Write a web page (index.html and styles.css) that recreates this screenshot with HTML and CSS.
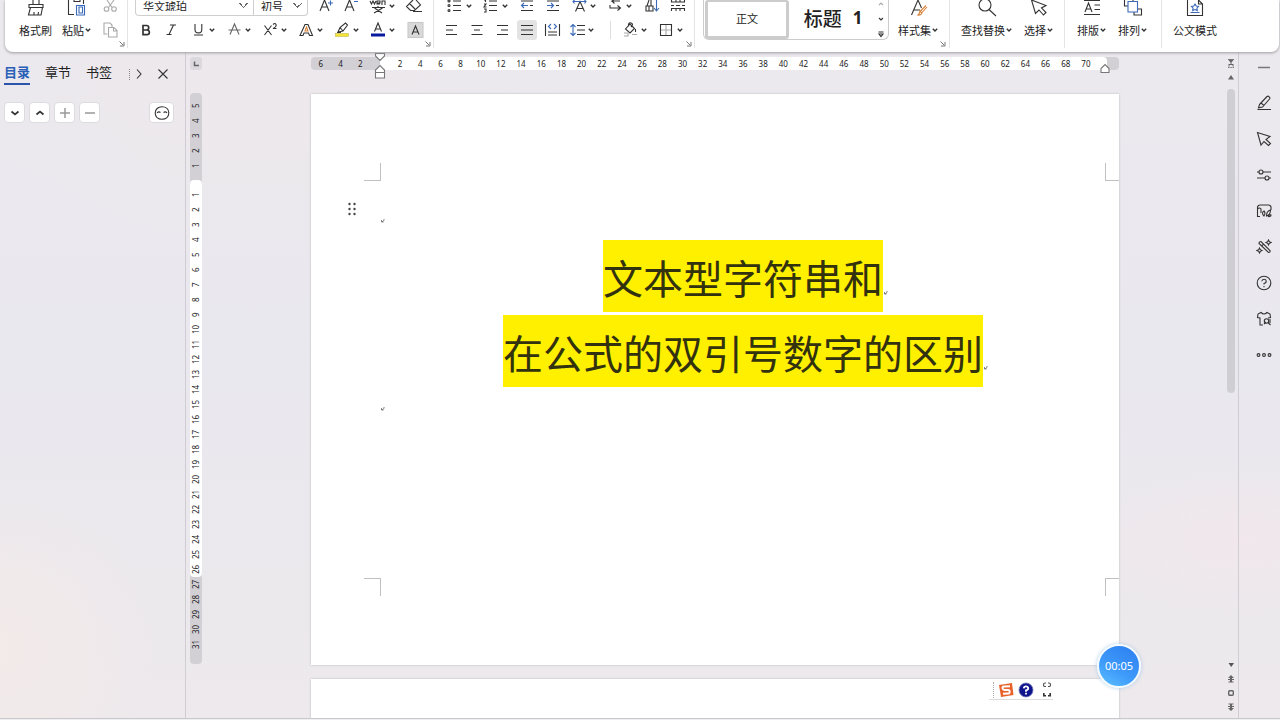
FILE: index.html
```html
<!DOCTYPE html>
<html lang="zh-CN">
<head>
<meta charset="utf-8">
<title>文字文稿</title>
<link rel="stylesheet" href="styles.css">
</head>
<body>
<svg class="defs" aria-hidden="true">
  <symbol id="chev" viewBox="0 0 8 8"><path d="M1.800 2.800 4 5 6.200 2.800" fill="none" stroke="#333" stroke-width="1.400"/></symbol>
  <symbol id="launch" viewBox="0 0 8 8"><path d="M1.500 1.500 5 5M6 2v4H2" fill="none" stroke="#777" stroke-width="1"/></symbol>
  <symbol id="mark" viewBox="0 0 6 6"><path d="M4 1v1.500L2 3.800M1.500 2v2h2" fill="none" stroke="#666" stroke-width=".8"/></symbol>
</svg>

<header class="ribbon">
  <section class="group clipboard">
    <div class="tools">
      <button class="big"><svg class="top" viewBox="0 0 20 18"><path d="M7 0v5M13 0v5M3 4.500h14v3H3zM4.500 7.500 2.500 15H15l1.500-7.500M8 15V12M12 15l.5-3" /></svg><span>格式刷</span></button>
      <button class="big"><svg class="top" viewBox="0 0 20 18"><path d="M7 14.500H1.500V0M7 0v1.500h6V0M16.500 0v4"/><path class="blue" d="M9.500 5.500h8v9.500h-8zM12 7h3.500v6H12z"/></svg><span>粘贴<svg class="chev"><use href="#chev"/></svg></span></button>
      <div class="pair">
        <button class="tool" aria-label="剪切"><svg class="top pale" viewBox="0 0 20 18"><path d="m5 0 5 7.500M12 0 6.500 7.500"/><circle cx="4.500" cy="9" r="2.300"/><circle cx="12" cy="9" r="2.300"/></svg></button>
        <button class="tool" aria-label="复制"><svg class="ico pale" viewBox="0 0 20 20"><path d="M5.500 14H2V3h6l2 2v2M6.500 7.500H12l3 3V17H6.500zM11.500 7.500V11H15"/></svg></button>
      </div>
    </div>
    <button class="launcher" aria-label="剪贴板"><svg><use href="#launch"/></svg></button>
  </section>

  <section class="group font">
    <div class="row upper">
      <div class="combo">
        <select class="family" aria-label="字体"><option>华文琥珀</option></select>
        <select class="size" aria-label="字号"><option>初号</option></select>
      </div>
      <button class="tool" aria-label="增大字号"><svg class="top" viewBox="0 0 20 18"><path d="m4 11 4.500-11L13 11M5.500 7h6"/><path class="blue" d="M12 3h5M14.500.5v5"/></svg></button>
      <button class="tool" aria-label="减小字号"><svg class="top" viewBox="0 0 20 18"><path d="m3 11 4.500-11L12 11M4.500 7h6"/><path class="blue" d="M12 1.500h4"/></svg></button>
      <button class="split" aria-label="拼音"><svg class="top" viewBox="0 0 20 18"><path d="m2 1 1.500 3L5 1l1.500 3L8 1M9 3h3V1H9v3h3M14 5V1h3v4M4 7.500h13M10 6v1.500M6.500 8l7.500 5M14.500 8 6 13"/></svg><svg class="chev"><use href="#chev"/></svg></button>
      <button class="tool" aria-label="清除格式"><svg class="top" viewBox="0 0 20 18"><path d="m9 0-6.500 6.500L6.500 10.500h4L16.500 5 12 0M5.500 3.500 11 9M9 11.500h9"/></svg></button>
    </div>
    <div class="row lower">
      <button class="tool" aria-label="加粗"><svg class="ico" viewBox="0 0 20 20"><path stroke-width="1.700" d="M7 5.500h3.500a2.200 2.200 0 0 1 0 4.500H7zM7 10h4a2.300 2.300 0 0 1 0 4.700H7z"/></svg></button>
      <button class="tool" aria-label="倾斜"><svg class="ico" viewBox="0 0 20 20"><path d="M8 5h6M4.500 14.500h5M11.500 5 7 14.500"/></svg></button>
      <button class="split" aria-label="下划线"><svg class="ico" viewBox="0 0 20 20"><path d="M7 4v5.500a3.400 3.400 0 0 0 6.800 0V4M6 15h9"/></svg><svg class="chev"><use href="#chev"/></svg></button>
      <button class="split" aria-label="删除线"><svg class="ico" viewBox="0 0 20 20"><path stroke="#666" d="M6 14.500 10.500 4 15 14.500M4.500 10h12"/></svg><svg class="chev"><use href="#chev"/></svg></button>
      <button class="split" aria-label="上标"><svg class="ico" viewBox="0 0 20 20"><path d="m4.500 5.500 7 9.500M11.500 5.500 4.500 15M13 4.500q2-2 3 0t-3 4h3.500"/></svg><svg class="chev"><use href="#chev"/></svg></button>
      <button class="split" aria-label="文字效果"><svg class="ico" viewBox="0 0 20 20"><path d="M4 15.500 9 4.500h3l4.500 11h-3l-1-2.500H8L7 15.500z"/><path class="orange" d="m9 11 1.500-4L12 11z"/></svg><svg class="chev"><use href="#chev"/></svg></button>
      <button class="split" aria-label="突出显示"><svg class="ico" viewBox="0 0 20 20"><path d="m6 12 2-4.500L13.500 3l2 2-4.500 6zM8 7.500l3 3.500M5 12.500h4"/><rect x="3.500" y="13.500" width="13" height="3" fill="#f4e43a" stroke="#b8ad40" stroke-width=".5"/></svg><svg class="chev"><use href="#chev"/></svg></button>
      <button class="split" aria-label="字体颜色"><svg class="ico" viewBox="0 0 20 20"><path d="M6.500 11.500 10 3l3.500 8.500M7.500 9h5"/><rect x="3" y="13.500" width="14" height="3" fill="#0a1a9c" stroke="none"/></svg><svg class="chev"><use href="#chev"/></svg></button>
      <button class="tool" aria-label="字符底纹"><svg class="ico" viewBox="0 0 20 20"><rect x="4" y="2.500" width="15" height="15" fill="#d9d9d9" stroke="#c8c8c8"/><path d="M8 14.500 11.500 6l3.500 8.500M9 12h5"/></svg></button>
    </div>
    <button class="launcher" aria-label="字体设置"><svg><use href="#launch"/></svg></button>
  </section>

  <section class="group para">
    <div class="row upper">
      <button class="split" aria-label="项目符号"><svg class="top" viewBox="0 0 20 18"><path d="M8 1h8M8 5.500h8M8 10.500h8"/><circle cx="4" cy="1" r="1"/><circle cx="4" cy="5.500" r="1"/><circle cx="4" cy="10.500" r="1"/></svg><svg class="chev"><use href="#chev"/></svg></button>
      <button class="split" aria-label="编号"><svg class="top" viewBox="0 0 20 18"><path d="M8 1h8M8 5.500h8M8 10.500h8M3 0h1.500v2M3 4h2L3 7h2.500M3 9h2v3H3"/></svg><svg class="chev"><use href="#chev"/></svg></button>
      <button class="tool" aria-label="减少缩进"><svg class="top" viewBox="0 0 20 18"><path d="M4 1h12M13 5.500h3M4 10.500h12"/><path class="blue" d="M11 5.500H4.500M7 3 4.500 5.500 7 8"/></svg></button>
      <button class="tool" aria-label="增加缩进"><svg class="top" viewBox="0 0 20 18"><path d="M4 1h12M13 5.500h3M4 10.500h12"/><path class="blue" d="M4 5.500h6.500M8 3l2.500 2.500L8 8"/></svg></button>
      <button class="split" aria-label="中文版式"><svg class="top" viewBox="0 0 20 18"><path d="m6.500 11.500 4.500-10 4.500 10M8 8.500h6"/><path class="blue" d="M4 1.500h13M5.500 0 4 1.500 5.500 3.500M15.500 0 17 1.500 15.500 3.500"/></svg><svg class="chev"><use href="#chev"/></svg></button>
      <button class="split" aria-label="显示编辑标记"><svg class="top" viewBox="0 0 20 18"><path d="M15 1H7L9.500-1M7 1l2.500 2.500M5 5v3h10M12.500 5.500 15.500 8 12.500 10.500"/></svg><svg class="chev"><use href="#chev"/></svg></button>
      <button class="tool" aria-label="排序"><svg class="top" viewBox="0 0 20 18"><path d="M8 0 6 6M10 0v6M5 6h7v5H5zM8 6v5"/><path class="blue" d="M15.500 0v10.500M13 8l2.500 3L18 8"/></svg></button>
      <button class="tool" aria-label="制表位"><svg class="top" viewBox="0 0 20 18"><path d="M4.500 0v2h13V0M4.500 11V8.500h13V11M4 5.500h3M9 5.500h4M15 5.500h3M9 0v2M13 0v2M9 8.500V11M13 8.500V11"/></svg></button>
    </div>
    <div class="row lower">
      <button class="tool" aria-label="左对齐"><svg class="ico" viewBox="0 0 20 20"><path d="M4 5.500h11M4 10h7M4 14.500h11"/></svg></button>
      <button class="tool" aria-label="居中"><svg class="ico" viewBox="0 0 20 20"><path d="M4.500 5.500h11M7 10h6M4.500 14.500h11"/></svg></button>
      <button class="tool" aria-label="右对齐"><svg class="ico" viewBox="0 0 20 20"><path d="M5 5.500h11M9 10h7M5 14.500h11"/></svg></button>
      <button class="tool on" aria-label="两端对齐"><svg class="ico" viewBox="0 0 20 20"><path d="M4 5.500h12M4 10h12M4 14.500h12"/></svg></button>
      <button class="tool" aria-label="分散对齐"><svg class="ico" viewBox="0 0 20 20"><path d="M3.500 4v12M17.500 4v12M6 12h9M6 15h9"/><path class="blue" d="M9 4 6.500 6.500 9 9M12 4l2.500 2.500L12 9"/></svg></button>
      <button class="split" aria-label="行距"><svg class="ico" viewBox="0 0 20 20"><path d="M10 5.500h8M10 10h8M10 14.500h8"/><path class="blue" d="M6 4.500v11M3.500 7 6 4.500 8.500 7M3.500 13 6 15.500 8.500 13"/></svg><svg class="chev"><use href="#chev"/></svg></button>
      <i class="rule"></i>
      <button class="split" aria-label="底纹"><svg class="ico" viewBox="0 0 20 20"><path d="m10 4-4.500 5L10 13l4.500-4.500zM8.500 6.500Q8 2 11 3t0 4M15.500 9v3"/><path stroke="#aaa" d="M4 13h4v3H4M12 14.500h5"/></svg><svg class="chev"><use href="#chev"/></svg></button>
      <button class="split" aria-label="边框"><svg class="ico" viewBox="0 0 20 20"><path d="M4.500 4.500h11v11h-11z"/><path stroke="#aaa" d="M10 5v10M5 10h10"/></svg><svg class="chev"><use href="#chev"/></svg></button>
    </div>
    <button class="launcher" aria-label="段落设置"><svg><use href="#launch"/></svg></button>
  </section>

  <section class="group styles">
    <div class="tools">
      <div class="gallery">
        <button class="style chosen">正文</button>
        <button class="style heading"><span>标题</span><span>1</span></button>
        <div class="arrows">
          <svg viewBox="0 0 8 8"><path stroke="#aaa" d="M2 5 4 3l2 2"/></svg>
          <svg viewBox="0 0 8 8"><path d="M2 3l2 2 2-2"/></svg>
          <svg viewBox="0 0 8 8"><path d="M1.500 2h5M2 4h4L4 6.500z"/></svg>
        </div>
      </div>
      <button class="big"><svg class="top" viewBox="0 0 20 18"><path d="M2.500 15 9 0l3.500 8M5 10h6"/><path class="orange" d="M17 5.500 11.500 11M18 7l-5 5.500M11 11l2 2q-1 2.500-4 2 1.500-1 2-4z"/></svg><span>样式集<svg class="chev"><use href="#chev"/></svg></span></button>
    </div>
    <button class="launcher" aria-label="样式设置"><svg><use href="#launch"/></svg></button>
  </section>

  <section class="group">
    <div class="tools find">
      <button class="big"><svg class="top" viewBox="0 0 20 18"><circle cx="8" cy="5" r="6"/><path d="m12 9.500 7 6.500"/></svg><span>查找替换<svg class="chev"><use href="#chev"/></svg></span></button>
      <button class="big"><svg class="top" viewBox="0 0 20 18"><path d="m2.500 0 4 13.500L10 10l4.500 5L17 12.500 12.500 8 17 5.500 2.500 0"/></svg><span>选择<svg class="chev"><use href="#chev"/></svg></span></button>
    </div>
  </section>
  <section class="group">
    <div class="tools arrange">
      <button class="big"><svg class="top" viewBox="0 0 20 18"><path d="M2 .5h16M12.500 5H18M12.500 9.500H18M2 14.500h16M3 12 6.500 3l3.500 9M4 9h5"/></svg><span>排版<svg class="chev"><use href="#chev"/></svg></span></button>
      <button class="big"><svg class="top" viewBox="0 0 20 18"><path d="M5 6H1.500V0M10 0v2M14 9h4.500v6H11v-3"/><path class="blue" d="M5 1.500h9.500V12H5z"/></svg><span>排列<svg class="chev"><use href="#chev"/></svg></span></button>
    </div>
  </section>
  <section class="group last">
    <div class="tools">
      <button class="big"><svg class="top" viewBox="0 0 20 18"><path d="M2.500 0v15.500h15V4L13.500 0v4h4"/><path class="blue" d="m10 4 1.200 2 2.300.4-1.600 1.800.4 2.300-2.300-1-2.300 1 .4-2.300L6.500 6.400 8.800 6zM5.500 12.500h9"/></svg><span>公文模式</span></button>
    </div>
  </section>
</header>

<main class="work">
  <aside class="nav">
    <div class="tabs">
      <button class="tab active">目录</button>
      <button class="tab">章节</button>
      <button class="tab">书签</button>
      <span class="hidden-tab"></span>
      <button class="next" aria-label="更多"><svg viewBox="0 0 12 12"><path d="m4 1.500 4 4.500-4 4.500"/></svg></button>
      <button class="close" aria-label="关闭"><svg viewBox="0 0 12 12"><path d="m1.500 1.500 9 9M10.500 1.500l-9 9"/></svg></button>
    </div>
    <div class="navtools">
      <button aria-label="展开"><svg viewBox="0 0 12 12"><path stroke-width="1.700" d="m2.500 4.500 3.500 3 3.500-3"/></svg></button>
      <button aria-label="收起"><svg viewBox="0 0 12 12"><path stroke-width="1.700" d="m2.500 7.500 3.500-3 3.500 3"/></svg></button>
      <button aria-label="添加"><svg viewBox="0 0 12 12"><path stroke="#999" stroke-width="1.500" d="M6 1v10M1 6h10"/></svg></button>
      <button aria-label="删除"><svg viewBox="0 0 12 12"><path stroke="#999" stroke-width="1.500" d="M1 6h10"/></svg></button>
      <button class="smart" aria-label="智能目录"><svg viewBox="0 0 16 14"><path d="M8 .8c4 0 6.800 2.500 6.800 6.200S12 13.200 8 13.200 1.200 10.700 1.200 7 4 .8 8 .8zM3 7q1.500-2 3.500-.5M9.500 6.500q2-1.500 3.500.5"/></svg></button>
    </div>
  </aside>

  <div class="vruler">
    <button class="tabstop" aria-label="制表符"><svg viewBox="0 0 12 12"><path stroke="#666" stroke-width="1.500" d="M4.500 3.500v4h4.500"/></svg></button>
    <div class="vscale">
      <div class="vdark head"><span>5</span><span>4</span><span>3</span><span>2</span><span>1</span></div>
      <div class="vlight"><span>1</span><span>2</span><span>3</span><span>4</span><span>5</span><span>6</span><span>7</span><span>8</span><span>9</span><span>10</span><span>11</span><span>12</span><span>13</span><span>14</span><span>15</span><span>16</span><span>17</span><span>18</span><span>19</span><span>20</span><span>21</span><span>22</span><span>23</span><span>24</span><span>25</span><span>26</span></div>
      <div class="vdark foot"><span>27</span><span>28</span><span>29</span><span>30</span><span>31</span></div>
    </div>
  </div>

  <div class="canvas">
    <div class="hruler">
      <div class="hneg"><span>6</span><span>4</span><span>2</span></div>
      <div class="hpos"><span>2</span><span>4</span><span>6</span><span>8</span><span>10</span><span>12</span><span>14</span><span>16</span><span>18</span><span>20</span><span>22</span><span>24</span><span>26</span><span>28</span><span>30</span><span>32</span><span>34</span><span>36</span><span>38</span><span>40</span><span>42</span><span>44</span><span>46</span><span>48</span><span>50</span><span>52</span><span>54</span><span>56</span><span>58</span><span>60</span><span>62</span><span>64</span><span>66</span><span>68</span><span>70</span></div>
      <svg class="indent left" viewBox="0 0 12 28"><path d="M1.500 2.500h9V5L6 9.500 1.500 5zM1.500 21.500V19L6 14.500l4.500 4.500v2.500zM1.500 21.500h9v5.500h-9z"/></svg>
      <svg class="indent right" viewBox="0 0 12 28"><path d="M2 21.500V17.500L6 13.500l4 4v4z"/></svg>
    </div>
    <article class="page first">
      <div class="crops"><i class="crop tl"></i><i class="crop tr"></i></div>
      <div class="text">
        <div class="para-row blank"><svg class="grip" viewBox="0 0 8 14"><g fill="#444" stroke="none"><circle cx="1.500" cy="2" r="1.200"/><circle cx="6.500" cy="2" r="1.200"/><circle cx="1.500" cy="7" r="1.200"/><circle cx="6.500" cy="7" r="1.200"/><circle cx="1.500" cy="12" r="1.200"/><circle cx="6.500" cy="12" r="1.200"/></g></svg><svg class="mark"><use href="#mark"/></svg></div>
        <p class="line"><span class="hl">文本型字符串和<svg class="mark end"><use href="#mark"/></svg></span></p>
        <p class="line"><span class="hl">在公式的双引号数字的区别<svg class="mark end"><use href="#mark"/></svg></span></p>
        <div class="para-row trail"><svg class="mark"><use href="#mark"/></svg></div>
      </div>
      <div class="crops"><i class="crop bl"></i><i class="crop br"></i></div>
    </article>
    <article class="page second"></article>

    <div class="ime">
      <i class="dots"></i>
      <svg viewBox="0 0 16 16"><path d="M1 3 14 1l1.500 12L3 15z" fill="#e9622b" stroke="none"/><path stroke="#fff" stroke-width="1.900" d="M12 4.200 6 4.500q-2 .2-1.500 1.800T6.500 8H10q2 .2 1.700 2T10 11.500l-5 .3"/></svg>
      <svg viewBox="0 0 16 16"><circle cx="8" cy="8" r="7" fill="#10148c" stroke="#6e76b8" stroke-width=".8"/><path stroke="#fff" stroke-width="1.800" d="M5.800 6.300q.2-2 2.200-2t2.200 1.800T8 8.300v1.400M8 10.800v1.700"/></svg>
      <svg class="brackets" viewBox="0 0 10 16"><path stroke="#555" stroke-width="1.200" d="M4 1H3Q1.500 1 1.500 2.800T3 4.500h1M6 1h1q1.500 0 1.500 1.800T7 4.500H6"/><path stroke-width="1.600" d="M1.800 11v2.800H4M8.200 11v2.800H6"/></svg>
    </div>
    <div class="timer">00:05</div>
  </div>

  <div class="scroll">
    <svg viewBox="0 0 8 10"><path stroke="#777" d="M1 1.500h6M1 9.500h1.500M3.300 9.500h1.500M5.600 9.500H7"/><path fill="#666" stroke="none" d="M1.500 2h5L4.500 4.500v1.500H6.500v2.500h-1V7h-3v1.500h-1V6h2V4.500z"/></svg>
    <svg viewBox="0 0 8 10"><path fill="#666" stroke="none" d="M1 7.500h6L4 3z"/></svg>
    <div class="thumb"></div>
    <svg viewBox="0 0 8 10"><path fill="#555" stroke="none" d="M1.500 3h5.500L4.200 7z"/></svg>
    <svg viewBox="0 0 8 10"><path fill="#666" stroke="none" d="M4 1 1 4h2v1H1v1h2v1.500H1.500v1h5v-1H5V6h2V5H5V4h2z"/></svg>
    <svg viewBox="0 0 8 10"><rect x="1.700" y="2.700" width="4.600" height="4.600" rx="1" stroke="#666" stroke-width="1.400"/></svg>
    <svg viewBox="0 0 8 10"><path fill="#666" stroke="none" d="M1.500 1.500h5v1H5V4h2v1H5v1h2L4 9 1 6h2V5H1V4h2V2.500H1.500z"/></svg>
  </div>

  <aside class="side">
    <button aria-label="收起"><svg viewBox="0 0 16 16"><path stroke="#777" stroke-width="1.500" d="M2 8.500h12"/></svg></button>
    <button aria-label="编辑"><svg viewBox="0 0 16 16"><path d="M3.500 9.500 11 1.500q1-.8 2.200.3t.3 2.200L6.500 12l-4 .8zM5 8l3 2.500M1.500 14.500h13.500"/></svg></button>
    <button aria-label="选择"><svg viewBox="0 0 16 16"><path d="M1.500 1.500 5 14l3-3.500 4.500 4 2-2L10 8.500l4-3z"/></svg></button>
    <button aria-label="设置"><svg viewBox="0 0 16 16"><circle cx="5" cy="5" r="2"/><circle cx="11" cy="11" r="2"/><path d="M1 5h2M7 5h8M1 11h8M13 11h2"/></svg></button>
    <button aria-label="图表"><svg viewBox="0 0 16 16"><path d="M4 13.500H1.500V4Q2 2 4 2h8.500q2 0 2.500 2v3M1.500 6q2-2 3.500 0v4M8 13q-3-3 0-5 2 2 0 5zM10.500 13q0-5 4-6 0 5-4 6zM12 13.500q1-2 3-1.500 0 2-3 1.500"/></svg></button>
    <button aria-label="魔法"><svg viewBox="0 0 16 16"><path d="M3 4.500Q3 2.500 5 2.500L14 11.500q.5 2-1.500 2zM5.500 7 8 4.800M12.500 1l.8 1.700 1.700.8-1.700.8-.8 1.700-.8-1.700L10 3.500l1.700-.8zM3.500 9l.8 1.700 1.700.8-1.700.8-.8 1.700-.8-1.700L1 11.500l1.700-.8z"/></svg></button>
    <button aria-label="帮助"><svg viewBox="0 0 16 16"><circle cx="8" cy="8" r="6.800"/><path d="M5.800 6.300Q6 4.200 8 4.200T10.200 6 8 8.500v1M8 11v1.300"/></svg></button>
    <button aria-label="皮肤"><svg viewBox="0 0 16 16"><path d="M7 14H4V7L1.500 6.500 2 3l3-1.500q3 3 6 0L14 3l.5 3.500-2.500.5"/><circle cx="10.500" cy="10" r="2.200"/><path d="m8 13 2-2M12 11.500l2.500 2.500M14 8v4"/></svg></button>
    <button aria-label="更多"><svg viewBox="0 0 16 16"><circle cx="2.500" cy="8" r="1.400"/><circle cx="8" cy="8" r="1.400"/><circle cx="13.500" cy="8" r="1.400"/></svg></button>
  </aside>
</main>
<footer class="status"></footer>
</body>
</html>
```

FILE: styles.css
```css
* { box-sizing: border-box; }

body {
  margin: 0;
  height: 100vh;
  overflow: hidden;
  display: flex;
  flex-direction: column;
  font: 11px/14px "Noto Sans CJK SC", sans-serif;
  color: #222;
  background:
    radial-gradient(circle at 0 90%, #f3eae9 0, transparent 160px),
    radial-gradient(ellipse at 97% 75%, #f1e7ec 0, transparent 180px),
    radial-gradient(ellipse at 20% 12%, #ede8ec 0, transparent 300px),
    linear-gradient(180deg, #ece9ee, #e9e8ee 50%, #ede9ec);
}

button {
  border: 0;
  padding: 0;
  margin: 0;
  background: none;
  font: inherit;
  color: inherit;
}

svg {
  display: block;
  flex: none;
  fill: none;
  stroke: #333;
  stroke-width: 1.100;
}

.defs { position: absolute; width: 0; height: 0; }
.blue { stroke: #3a69b8; }
.orange { stroke: #d9833a; }
.pale { stroke: #aaa; }

/* Ribbon */
.ribbon {
  flex: none;
  display: flex;
  height: 52px;
  margin: 0 1px 0 5px;
  background: #fff;
  border-radius: 0 0 8px 8px;
  box-shadow: 0 1px 3px #9c9aa0;
  z-index: 2;
}
.group {
  display: flex;
  flex-direction: column;
  height: 48px;
  border-right: 1px solid #e4e4e4;
}
.group.last { border-right: 0; }
.row { display: flex; align-items: center; }
.upper { height: 18px; margin-bottom: 2px; }
.lower { height: 22px; }
.tools { display: flex; height: 42px; }
.top { width: 20px; height: 18px; }
.ico { width: 20px; height: 20px; }
.chev { width: 8px; height: 8px; }
.tool { width: 26px; }
.split { width: 36px; display: flex; align-items: center; }
.upper .chev { margin-bottom: 6px; }
.launcher { align-self: flex-end; margin-right: 1px; }
.launcher svg { width: 8px; height: 8px; }
.big {
  display: flex;
  flex-direction: column;
  align-items: center;
  gap: 5px;
  white-space: nowrap;
}
.big span { display: flex; align-items: center; }

.clipboard { width: 123px; padding-left: 14px; }
.clipboard .tools { gap: 10px; }
.pair { display: flex; flex-direction: column; gap: 2px; }

.font { width: 306px; padding-left: 7px; }
.font .upper, .font .lower { padding-left: 1px; }
.font .tool:last-child { width: 24px; }
.combo {
  display: flex;
  width: 173px;
  height: 16px;
  margin: 0 8px 2px -1px;
  border: 1px solid #cfcfcf;
  border-top: 0;
  border-radius: 0 0 4px 4px;
}
select {
  appearance: none;
  border: 0;
  padding: 0 0 4px 7px;
  font: inherit;
  line-height: 12px;
  color: inherit;
  background: transparent;
  background-image:
    linear-gradient(45deg, transparent 46%, #666 46% 60%, transparent 60%),
    linear-gradient(-45deg, transparent 46%, #666 46% 60%, transparent 60%);
  background-size: 5px 5px;
  background-position: right 9px top 3px, right 5px top 3px;
  background-repeat: no-repeat;
}
.family { width: 118px; border-right: 1px solid #cfcfcf; }
.size { flex: 1; }

.para { width: 261px; padding-left: 8px; }
.para .upper { padding-left: 3px; }
.para .lower .tool { width: 25px; display: flex; }
.para .on svg { background: #e3e3e3; border-radius: 3px; }
.rule { width: 1px; height: 18px; margin: 0 9px 0 7px; background: #ddd; }

.styles { padding: 0 10px 0 8px; }
.styles .tools { gap: 9px; }
.styles .launcher { margin-right: -8px; }
.gallery {
  display: flex;
  width: 186px;
  height: 40px;
  padding-left: 1px;
  border: 1px solid #ccc;
  border-top: 0;
  border-radius: 0 0 6px 6px;
}
.style.chosen {
  width: 84px;
  height: 39px;
  padding-bottom: 3px;
  border: 3px solid #ccc;
  border-top-width: 2px;
  border-radius: 3px;
}
.style.heading {
  flex: 1;
  display: flex;
  justify-content: center;
  align-items: center;
  gap: 11px;
  height: 35px;
  font-size: 19px;
  font-weight: 500;
}
.heading span + span { font-family: "Noto Sans", sans-serif; font-weight: 700; font-size: 17px; }
.arrows { display: flex; flex-direction: column; gap: 7px; padding-right: 3px; }
.arrows svg { width: 8px; height: 8px; }

.find { gap: 11px; padding: 0 10px 0 11px; }
.arrange { gap: 11px; padding: 0 13px 0 12px; }
.last { padding-left: 11px; }

/* Work area */
.work { flex: 1; display: flex; min-height: 0; }

.nav {
  flex: none;
  width: 186px;
  padding: 11px 11px 0 4px;
  border-right: 1px solid #cfcdd3;
}
.tabs { display: flex; align-items: center; height: 22px; padding-right: 5px; font-size: 13px; line-height: 16px; }
.tab { width: 26px; height: 22px; margin-right: 15px; padding-bottom: 4px; white-space: nowrap; }
.tab.active { padding-bottom: 2px; color: #2a5fb8; font-weight: 700; border-bottom: 2px solid #2a55a8; }
.hidden-tab { width: 1px; height: 11px; margin: 0 3px 0 2px; border-left: 1px dotted #888; }
.next svg, .close svg { width: 12px; height: 12px; }
.close { margin-left: auto; }
.navtools { display: flex; gap: 4px; margin-top: 17px; }
.navtools button {
  display: grid;
  place-items: center;
  width: 21px;
  height: 21px;
  background: #fff;
  border: 1px solid #dcdbe0;
  border-radius: 4px;
}
.navtools svg { width: 12px; height: 12px; }
.navtools .smart { width: 25px; margin-left: auto; }
.navtools .smart svg { width: 16px; height: 14px; }

.vruler { flex: none; width: 19px; padding: 5px 3px 0 4px; font: 8px/12px "Noto Sans", sans-serif; }
.tabstop { display: block; width: 12px; height: 13px; background: #dbd9de; border-radius: 3px; }
.tabstop svg { width: 12px; height: 12px; }
.vscale { width: 12px; margin-top: 23px; background: #d2d0d5; border-radius: 4px; }
.vscale span {
  display: block;
  height: 15px;
  writing-mode: vertical-rl;
  transform: rotate(180deg);
  text-align: center;
}
.head { padding: 5px 0 7px; }
.vlight { padding-top: 7px; background: #fff; border-radius: 4px; }
.foot { padding-bottom: 12px; }

.canvas {
  position: relative;
  flex: 1;
  min-width: 0;
  overflow: hidden;
  display: flex;
  flex-direction: column;
  align-items: center;
  padding: 5px 0 0;
}
.hruler {
  position: relative;
  flex: none;
  display: flex;
  width: 808px;
  max-width: 100%;
  height: 13px;
  padding-right: 12px;
  background: #d2d0d5;
  border-radius: 4px;
  font: 8px/13px "Noto Sans", sans-serif;
  text-align: center;
}
.hneg { display: flex; justify-content: flex-end; width: 69px; padding-right: 10px; }
.hneg span { width: 20px; }
.hpos { flex: 1; display: flex; padding: 0 11px 0 10px; background: #fff; border-radius: 4px; }
.hpos span { flex: 1 1 0; }
.indent { position: absolute; top: -6px; width: 12px; height: 28px; fill: #fff; stroke: #777; }
.indent.left { left: 63px; }
.indent.right { right: 8px; }

.page {
  flex: none;
  width: 808px;
  max-width: 100%;
  background: #fff;
  box-shadow: 0 0 2px #b5b4b9;
}
.first { margin-top: 24px; padding: 69px 0; }
.second { height: 60px; margin-top: 14px; }
.crops { display: flex; justify-content: space-between; padding-left: 53px; }
.crop { width: 17px; height: 18px; border: 0 solid #c0c0c0; }
.tl { border-width: 0 1px 1px 0; }
.tr { width: 14px; border-width: 0 0 1px 1px; }
.bl { border-width: 1px 1px 0 0; }
.br { width: 14px; border-width: 1px 0 0 1px; }
.text { padding: 0 13px 0 69px; }
.mark { width: 6px; height: 6px; }
.blank { display: flex; height: 59px; margin-left: -32px; padding-top: 21px; gap: 24px; }
.blank .mark { margin-top: 16px; }
.grip { width: 8px; height: 14px; }
.line { margin: 0 0 3px; text-align: center; font-size: 40px; line-height: 64px; color: #33320f; white-space: nowrap; }
.hl { position: relative; display: inline-block; height: 72px; padding-top: 5px; background: #fff000; vertical-align: top; }
.mark.end { position: absolute; left: 100%; top: 50px; }
.trail { height: 188px; padding-top: 16px; }

.ime {
  position: absolute;
  right: 172px;
  bottom: 18px;
  display: flex;
  align-items: center;
  gap: 4px;
  width: 64px;
  height: 20px;
  padding-left: 4px;
  background: #fff;
  border-bottom: 1px solid #ddd;
}
.ime svg { width: 16px; height: 16px; }
.dots { height: 16px; border-left: 1px dotted #aaa; }
.ime .brackets { width: 10px; margin-left: 4px; }

.timer {
  position: absolute;
  right: 84px;
  bottom: 30px;
  width: 44px;
  height: 44px;
  border: 2px solid #f4fbff;
  border-radius: 50%;
  background: linear-gradient(210deg, #2b7df0, #3f9bfa 60%, #5cc0ff);
  box-shadow: 0 0 4px #aecbe6;
  color: #fff;
  font: 11px/40px "Noto Sans", sans-serif;
  text-align: center;
}

.scroll {
  flex: none;
  display: flex;
  flex-direction: column;
  align-items: center;
  gap: 4px;
  width: 14px;
  padding: 6px 1px 6px 0;
  border-right: 1px solid #cfcdd3;
}
.scroll svg { width: 8px; height: 10px; }
.thumb { width: 8px; height: 304px; margin: 3px 0 auto; background: #cfced2; border-radius: 4px; }

.side {
  flex: none;
  display: flex;
  flex-direction: column;
  align-items: center;
  gap: 20px;
  width: 41px;
  padding: 7px 0 0 9px;
}
.side svg { width: 16px; height: 16px; }

.status { flex: none; height: 2px; border-top: 1px solid #c9c8cc; background: #efeef1; }
```
